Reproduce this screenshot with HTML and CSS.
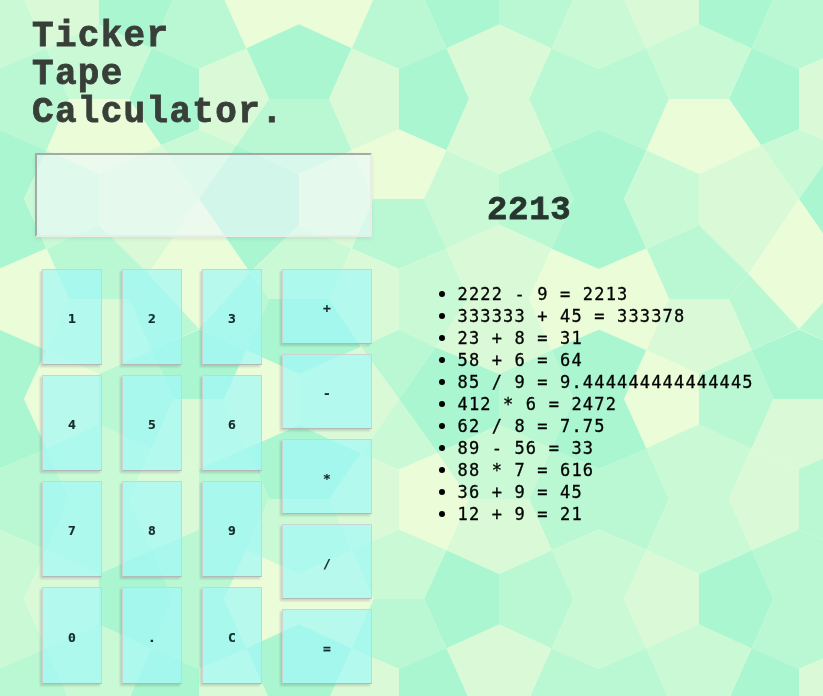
FILE: index.html
```html
<!DOCTYPE html>
<html lang="en">
<head>
<meta charset="utf-8">
<title>Ticker Tape Calculator</title>
<link rel="stylesheet" href="styles.css">
</head>
<body>
<svg class="backdrop" aria-hidden="true">
  <defs>
    <polygon id="u" points="69,99 129,99 151.7,48.3 99,24.3 46.5,48.3"/>
    <polygon id="l" points="69,99 129,99 151.7,150.3 99,174 46.5,150.3"/>
    <polygon id="r" points="99,174 99,225 46.5,248.7 24,199 46.5,150.3"/>
    <polygon id="s" points="99,174 99,225 151.7,248.7 173.5,199 151.7,150.3"/>
    <polygon id="w" points="199,69 199,129.5 151.7,150.3 129,99 151.7,48.3"/>
    <polygon id="x" points="199,69 199,129.5 246.5,150.3 269,99 246.5,48.3"/>
    <polygon id="p" points="173.5,199 224,199 246.5,150.3 199,129.5 151.7,150.3"/>
    <polygon id="q" points="173.5,199 224,199 246.5,248.7 199,269 151.7,248.7"/>
    <g id="tile">
      <!-- row 0 -->
      <use href="#r" y="-200" class="d"/><use href="#s" y="-200" class="a"/>
      <use href="#r" x="200" y="-200" class="e"/><use href="#s" x="200" y="-200" class="e"/>
      <use href="#r" x="400" y="-200" class="a"/><use href="#s" x="400" y="-200" class="b"/>
      <use href="#q" x="-200" y="-200" class="c"/><use href="#q" y="-200" class="b"/><use href="#q" x="200" y="-200" class="b"/>
      <use href="#u" class="c"/><use href="#u" x="200" class="a"/><use href="#u" x="400" class="d"/>
      <use href="#x" x="-200" class="b"/>
      <polygon class="a" points="199,69 199,129.5 161,145.3 129,99 151.7,48.3"/>
      <polygon class="d" points="199,69 199,129.5 236.5,145.3 269,99 246.5,48.3"/>
      <use href="#w" x="200" class="d"/><use href="#x" x="200" class="a"/><use href="#w" x="400" class="b"/>
      <polygon class="e" points="69,99 129,99 161,145.3 99,174 46.5,150.3"/>
      <polygon class="b" points="269,99 329,99 351.7,150.3 299,174 236.5,145.3"/>
      <use href="#l" x="400" class="d"/>
      <use href="#p" x="-200" class="a"/>
      <polygon class="c" points="199,199 161,145.3 199,129.5 236.5,145.3"/>
      <use href="#p" x="200" class="e"/>
      <!-- row 1 -->
      <use href="#r" class="c"/>
      <polygon class="d" points="99,174 99,225 148.5,274 199,199 161,145.3"/>
      <polygon class="a" points="299,174 299,225 250,272.5 199,199 236.5,145.3"/>
      <use href="#s" x="200" class="d"/>
      <use href="#r" x="400" class="c"/><use href="#s" x="400" class="b"/>
      <use href="#q" x="-200" class="a"/>
      <polygon class="e" points="199,199 148.5,274 199,329 250,272.5"/>
      <use href="#q" x="200" class="b"/>
      <polygon class="b" points="69,299 129,299 148.5,274 99,225 46.5,248.7"/>
      <polygon class="c" points="269,299 329,299 351.7,248.7 299,225 250,272.5"/>
      <use href="#u" x="400" y="200" class="d"/>
      <use href="#x" x="-200" y="200" class="e"/>
      <polygon class="b" points="199,329 151.7,350.3 129,299 148.5,274"/>
      <polygon class="b" points="199,329 246.5,350.3 269,299 250,272.5"/>
      <polygon class="d" points="399,269 399,329.5 361,347 329,299 351.7,248.7"/>
      <polygon class="c" points="399,269 399,329.5 435.5,347 469,299 446.5,248.7"/>
      <use href="#w" x="400" y="200" class="e"/>
      <use href="#l" y="200" class="d"/>
      <polygon class="a" points="269,299 329,299 361,347 299,374 246.5,350.3"/>
      <polygon class="d" points="469,299 529,299 551.7,350.3 499,374 435.5,347"/>
      <use href="#p" x="-200" y="200" class="a"/><use href="#p" y="200" class="a"/>
      <polygon class="b" points="399,399 361,347 399,329.5 435.5,347"/>
      <!-- row 2 -->
      <use href="#r" y="200" class="e"/><use href="#s" y="200" class="b"/>
      <use href="#r" x="200" y="200" class="e"/>
      <polygon class="d" points="299,374 299,425 361,453.5 399,399 361,347"/>
      <polygon class="a" points="499,374 499,425 437.5,453 399,399 435.5,347"/>
      <use href="#s" x="400" y="200" class="b"/>
      <use href="#q" x="-200" y="200" class="a"/><use href="#q" y="200" class="d"/>
      <polygon class="c" points="399,399 361,453.5 399,469.5 437.5,453"/>
      <use href="#u" y="400" class="c"/>
      <polygon class="a" points="269,499 329,499 361,453.5 299,425 246.5,448.5"/>
      <polygon class="c" points="469,499 529,499 551.7,448.5 499,425 437.5,453"/>
      <use href="#x" x="-200" y="400" class="b"/><use href="#w" y="400" class="d"/><use href="#x" y="400" class="b"/>
      <polygon class="d" points="399,469.5 399,529.5 351.7,550.5 329,499 361,453.5"/>
      <polygon class="e" points="399,469.5 399,529.5 446.5,550.5 469,499 437.5,453"/>
      <use href="#w" x="400" y="400" class="b"/>
      <use href="#l" y="400" class="c"/><use href="#l" x="200" y="400" class="c"/><use href="#l" x="400" y="400" class="d"/>
      <use href="#p" x="-200" y="400" class="c"/><use href="#p" y="400" class="b"/><use href="#p" x="200" y="400" class="c"/>
    </g>
  </defs>
  <use href="#tile"/><use href="#tile" x="600"/><use href="#tile" y="600"/><use href="#tile" x="600" y="600"/>
</svg>
<main class="app">
  <section class="calculator">
    <h1 class="title">Ticker<br>Tape<br>Calculator.</h1>
    <input class="display" type="text" aria-label="Current entry">
    <div class="keypad">
      <div class="digits">
        <button>1</button><button>2</button><button>3</button>
        <button>4</button><button>5</button><button>6</button>
        <button>7</button><button>8</button><button>9</button>
        <button>0</button><button>.</button><button>C</button>
      </div>
      <div class="operators">
        <button>+</button><button>-</button><button>*</button><button>/</button><button>=</button>
      </div>
    </div>
  </section>
  <section class="tape">
    <h2 class="result">2213</h2>
    <ul class="history">
      <li>2222 - 9 = 2213</li>
      <li>333333 + 45 = 333378</li>
      <li>23 + 8 = 31</li>
      <li>58 + 6 = 64</li>
      <li>85 / 9 = 9.444444444444445</li>
      <li>412 * 6 = 2472</li>
      <li>62 / 8 = 7.75</li>
      <li>89 - 56 = 33</li>
      <li>88 * 7 = 616</li>
      <li>36 + 9 = 45</li>
      <li>12 + 9 = 21</li>
    </ul>
  </section>
</main>
</body>
</html>
```
FILE: styles.css
```css
* { box-sizing: border-box; }

body {
  margin: 0;
  height: 696px;
  overflow: hidden;
  background: #f2fdec;
  font-family: "DejaVu Sans Mono", "Courier New", monospace;
  color: #000;
}

.backdrop {
  position: fixed;
  inset: 0;
  z-index: -1;
  width: 100%;
  height: 100%;
}
.a { fill: #aaf6d0; }
.b { fill: #baf8d4; }
.c { fill: #cafad5; }
.d { fill: #dafad7; }
.e { fill: #eafcd8; }

.app { display: flex; }

.calculator { width: 372px; padding: 18px 0 0 32px; }

.title {
  margin: 0;
  font-family: "Liberation Mono", "Courier New", monospace;
  font-size: 36px;
  line-height: 38px;
  font-weight: 700;
  letter-spacing: 1.3px;
  color: #383f39;
  -webkit-text-stroke: 0.8px #383f39;
}

.display {
  display: block;
  width: 337px;
  height: 84px;
  margin: 21px 0 32px 3px;
  border: 2px solid;
  border-color: #a4aaa6 #e9edea #e9edea #a4aaa6;
  background: rgba(237, 248, 251, 0.6);
  box-shadow: 0 2px 4px rgba(0, 0, 0, 0.08);
  background-clip: padding-box;
}

.keypad { display: flex; gap: 20px; padding-left: 10px; }
.digits {
  display: grid;
  grid-template-columns: repeat(3, 60px);
  grid-template-rows: repeat(3, 96px) 97px;
  gap: 10px 20px;
}
.operators {
  display: grid;
  grid-template-columns: 90px;
  grid-template-rows: repeat(5, 75px);
  gap: 10px;
}
.keypad button {
  padding: 3px 0 0;
  border: 1px solid;
  border-color: #cdd2d3 #cdd2d3 #b3b8ba #cdd2d3;
  background: rgba(159, 247, 249, 0.67);
  background-clip: padding-box;
  box-shadow: -2px 2px 2px rgba(0, 0, 0, 0.14);
  font: 700 13px "DejaVu Sans Mono", monospace;
  color: #142a29;
  -webkit-text-stroke: 0.2px #142a29;
}

.tape { padding: 190px 0 0 46px; }
.result {
  margin: 0 0 51px 69px;
  font-family: "Liberation Mono", "Courier New", monospace;
  font-size: 34px;
  line-height: 41px;
  letter-spacing: 0.7px;
  color: #26362e;
  -webkit-text-stroke: 0.8px #26362e;
}
.history {
  margin: 0;
  padding-left: 39.5px;
  font-size: 17px;
  line-height: 22px;
  letter-spacing: 1.16px;
  white-space: nowrap;
  -webkit-text-stroke: 0.3px #000;
}
.history li { height: 22px; }
.history li::marker { font-size: 21px; }
```
